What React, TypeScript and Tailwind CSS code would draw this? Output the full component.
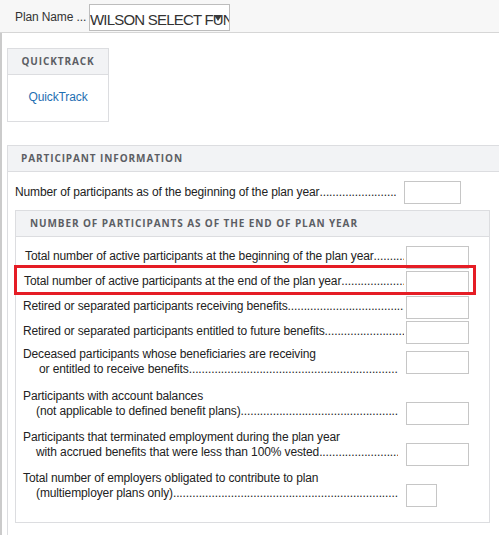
import React from "react";

const DOTS = ".".repeat(120);

function Box({ w = "w-[63px]" }: { w?: string }) {
  return <div className={`${w} h-[23px] shrink-0 border border-[#c6c6c6] bg-white`} />;
}

function Leader({ text, className = "" }: { text: string; className?: string }) {
  return (
    <div className={`flex min-w-0 whitespace-nowrap ${className}`}>
      <span>{text}</span>
      <span className="min-w-0 flex-1 overflow-hidden">{DOTS}</span>
    </div>
  );
}

function SingleRow({ text, indent, mt }: { text: string; indent: string; mt: string }) {
  return (
    <div className={`flex items-center ${mt}`}>
      <Leader text={text} className={`w-[383px] pr-[2px] pb-[3px] ${indent}`} />
      <Box />
    </div>
  );
}

function DoubleRow({
  first,
  second,
  mt,
  indent,
  boxMb,
  boxW,
}: {
  first: string;
  second: string;
  mt: string;
  indent: string;
  boxMb: string;
  boxW?: string;
}) {
  return (
    <div className={`flex items-end ${mt}`}>
      <div className="w-[383px] pr-[8px] leading-[15px]">
        <div className="whitespace-nowrap">{first}</div>
        <Leader text={second} className={indent} />
      </div>
      <div className={boxMb}>
        <Box w={boxW} />
      </div>
    </div>
  );
}

function CardHeader({ title, className = "" }: { title: string; className?: string }) {
  return (
    <div
      className={`border-b border-[#dcdde0] bg-[#f2f3f5] text-[10px] font-bold tracking-[0.09em] text-[#5c5e64] ${className}`}
      style={{ fontFamily: '"Open Sans", "Noto Sans", sans-serif' }}
    >
      {title}
    </div>
  );
}

export default function App() {
  return (
    <div
      className="h-[535px] w-[499px] overflow-hidden bg-white text-[12px] tracking-[-0.12px] text-[#222]"
      style={{ fontFamily: '"Liberation Sans", Arial, sans-serif' }}
    >
      <div className="flex h-[33px] items-start border-b border-[#d6d6d6] bg-[#f7f7f7] pl-[15px]">
        <span className="mt-[8px] w-[74px] text-[#333]">Plan Name ...</span>
        <div className="relative mt-[4px] h-[27px] w-[141px] overflow-hidden border border-[#bdbdbd] bg-white">
          <span className="absolute left-[0px] top-[4px] whitespace-nowrap text-[15px] tracking-[-0.8px] text-[#333]">
            WILSON SELECT FUND
          </span>
          <span className="absolute right-[7px] top-[10px] h-0 w-0 border-x-[4px] border-t-[6px] border-x-transparent border-t-[#3a3a3a]" />
        </div>
      </div>

      <div className="h-full border-l-[2px] border-[#cbcbcb] pl-[5px] pt-[15px]">
        <div className="w-[102px] border border-[#dcdde0]">
          <CardHeader title="QUICKTRACK" className="flex h-[26px] items-center justify-center" />
          <div className="flex h-[46px] items-center justify-center pb-[2px] text-[#1f6fb2]">QuickTrack</div>
        </div>

        <div className="mt-[23px] w-[520px] border border-[#dcdde0]">
          <CardHeader title="PARTICIPANT INFORMATION" className="flex h-[26px] items-center pl-[13px]" />
          <div className="px-[7px] pt-[9px] pb-[30px]">
            <div className="flex items-center">
              <Leader text="Number of participants as of the beginning of the plan year" className="w-[389px] pr-[8px] pb-[2px]" />
              <Box w="w-[57px]" />
            </div>

            <div className="mt-[6px] w-[475px] border border-[#dcdde0]">
              <CardHeader title="NUMBER OF PARTICIPANTS AS OF THE END OF PLAN YEAR" className="flex h-[26px] items-center pl-[14px]" />
              <div className="pl-[7px] pt-[9px] pb-[21px]">
                <SingleRow text="Total number of active participants at the beginning of the plan year" indent="pl-[2px]" mt="" />
                <div className="relative">
                  <SingleRow text="Total number of active participants at the end of the plan year" indent="pl-[1px]" mt="mt-[2px]" />
                  <div className="pointer-events-none absolute -left-[9px] top-[-6px] h-[30px] w-[462px] border-[3px] border-[#e51d25]" />
                </div>
                <SingleRow text="Retired or separated participants receiving benefits" indent="" mt="mt-[2px]" />
                <SingleRow text="Retired or separated participants entitled to future benefits" indent="" mt="mt-[2px]" />
                <DoubleRow
                  first="Deceased participants whose beneficiaries are receiving"
                  second="or entitled to receive benefits"
                  indent="pl-[16px]"
                  mt="mt-[3px]"
                  boxMb="mb-[3px]"
                />
                <DoubleRow
                  first="Participants with account balances"
                  second="(not applicable to defined benefit plans)"
                  indent="pl-[13px]"
                  mt="mt-[12px]"
                  boxMb="mb-[-6px]"
                />
                <DoubleRow
                  first="Participants that terminated employment during the plan year"
                  second="with accrued benefits that were less than 100% vested"
                  indent="pl-[13px]"
                  mt="mt-[11px]"
                  boxMb="mb-[-6px]"
                />
                <DoubleRow
                  first="Total number of employers obligated to contribute to plan"
                  second="(multiemployer plans only)"
                  indent="pl-[13px]"
                  mt="mt-[11px]"
                  boxMb="mb-[-6px]"
                  boxW="w-[31px]"
                />
              </div>
            </div>
          </div>
        </div>
      </div>
    </div>
  );
}
